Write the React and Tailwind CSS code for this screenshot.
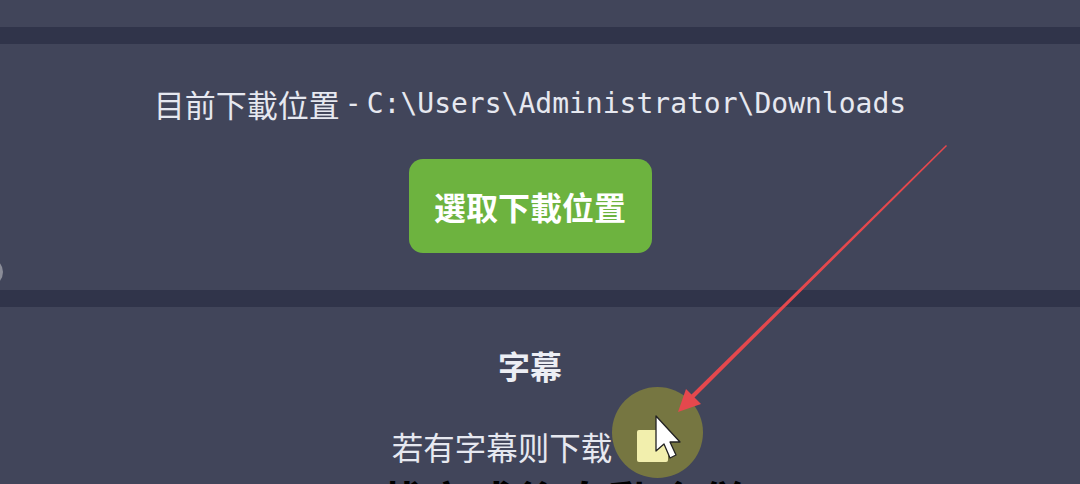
import React from "react";

const cjk = { fontFamily: '"Noto Sans CJK SC", "Noto Sans CJK TC", sans-serif' };
const mono = { fontFamily: '"DejaVu Sans Mono", "Liberation Mono", monospace' };

function Band() {
  return <div className="h-[17px] w-full bg-[#30344a]" />;
}

export default function App() {
  return (
    <div className="relative w-[1080px] h-[484px] overflow-hidden bg-[#41455a] text-[#e6e8f0]" style={cjk}>
      <div className="h-[27px]" />
      <Band />

      <section className="h-[246px] flex flex-col items-center pt-[40px] pr-[20px]">
        <div className="flex items-center h-[40px] leading-[40px]">
          <span className="text-[31px]">目前下載位置</span>
          <span className="text-[28px] mx-[5px]" style={mono}>-</span>
          <span className="text-[28px]" style={mono}>C:\Users\Administrator\Downloads</span>
        </div>
        <button className="mt-[35px] w-[243px] h-[94px] rounded-[14px] bg-[#6db33f] text-white text-[32px] font-bold">
          選取下載位置
        </button>
      </section>

      <Band />

      <section className="flex flex-col items-center pt-[38px] pr-[20px]">
        <div className="h-[40px] leading-[40px] text-[32px] font-bold text-[#eceef4]">字幕</div>
        <div className="mt-[41px] flex items-center h-[40px] leading-[40px]">
          <span className="text-[31.5px]">若有字幕则下载</span>
          <span className="ml-[25px] w-[31px] h-[32px] bg-white rounded-[2px]" />
        </div>
        <div className="mt-[12px] text-[44px] font-bold text-black leading-none tracking-[2px] ml-[20px]">
          下載完成後自動合併
        </div>
      </section>

      <div className="absolute left-[-25px] top-[258px] w-[28px] h-[28px] rounded-full bg-[#8a8c98]" />

      <div className="absolute left-[612px] top-[387px] w-[91px] h-[91px] rounded-full bg-[#dbd013]/35" />

      <svg className="absolute left-0 top-0" width="1080" height="484" viewBox="0 0 1080 484">
        <polygon points="946,145 947,146 694,398 691,395" fill="#e5484d" />
        <polygon points="678,412 686,389 701,404" fill="#e5484d" />
        <path d="M656 416 L656 451 L664 444 L670 458 L676 455 L670 442 L680 442 Z" fill="#ffffff" stroke="#222" strokeWidth="1.3" strokeLinejoin="round" />
      </svg>
    </div>
  );
}
